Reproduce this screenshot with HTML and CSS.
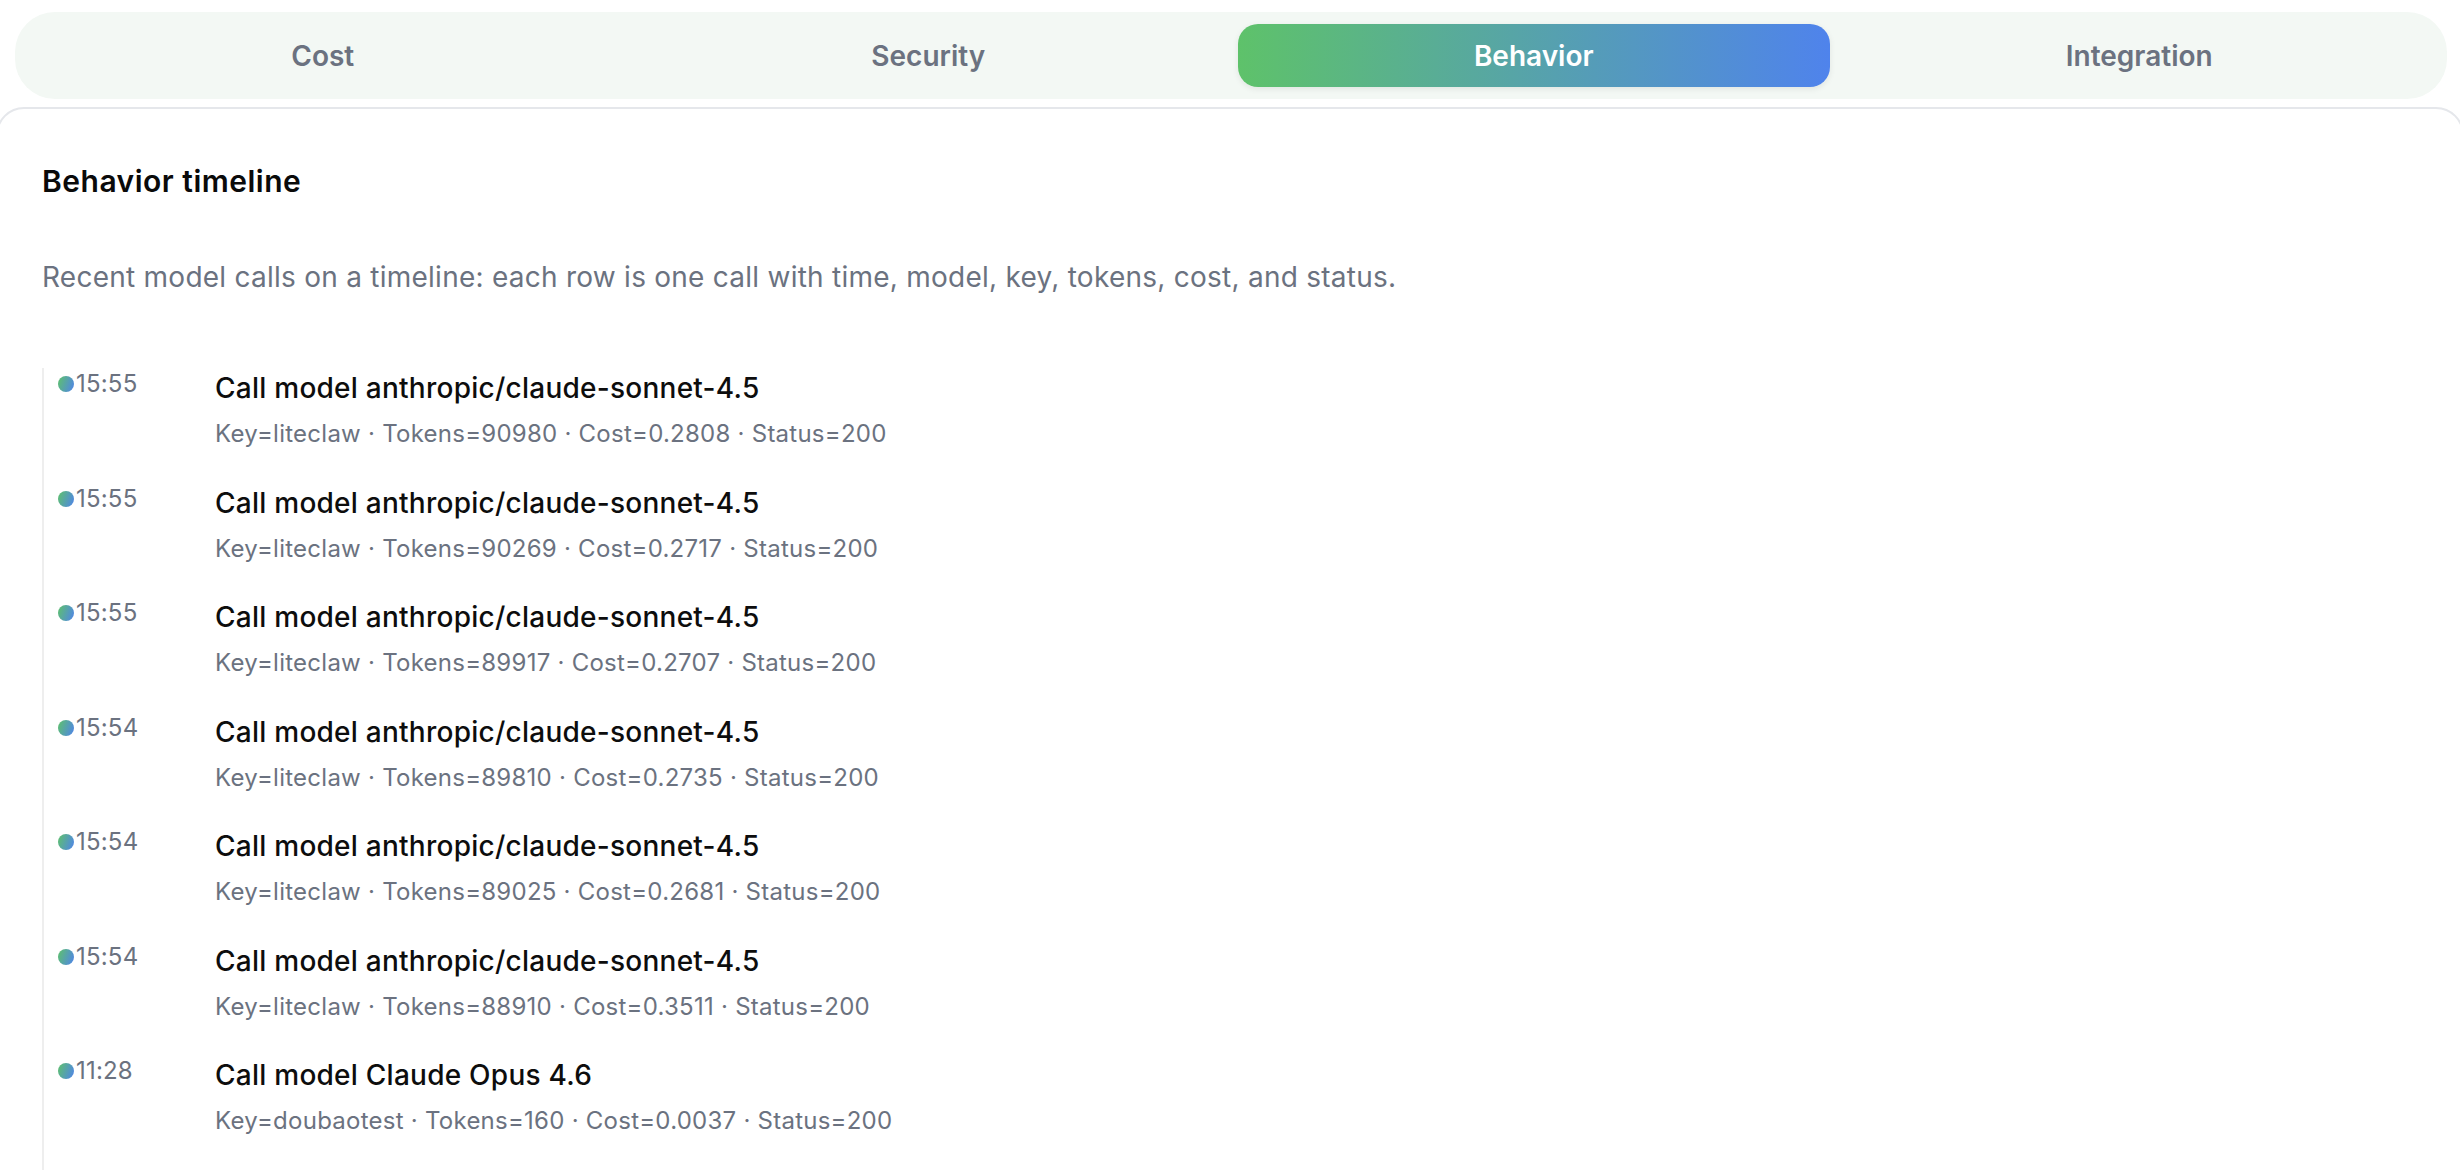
FILE: index.html
```html
<!DOCTYPE html>
<html lang="en">
<head>
<meta charset="utf-8">
<title>Behavior timeline</title>
<link rel="stylesheet" href="styles.css">
</head>
<body>
<div class="page">
  <nav class="tabs">
    <button class="tab">Cost</button>
    <button class="tab">Security</button>
    <button class="tab active">Behavior</button>
    <button class="tab">Integration</button>
  </nav>
  <section class="card">
    <h2 class="card-title">Behavior timeline</h2>
    <p class="card-desc">Recent model calls on a timeline: each row is one call with time, model, key, tokens, cost, and status.</p>
    <ul class="timeline">
      <li class="event">
        <div class="when"><span class="dot"></span><span class="time">15:55</span></div>
        <div class="what">
          <div class="event-title">Call model anthropic/claude-sonnet-4.5</div>
          <div class="event-meta">Key=liteclaw · Tokens=90980 · Cost=0.2808 · Status=200</div>
        </div>
      </li>
      <li class="event">
        <div class="when"><span class="dot"></span><span class="time">15:55</span></div>
        <div class="what">
          <div class="event-title">Call model anthropic/claude-sonnet-4.5</div>
          <div class="event-meta">Key=liteclaw · Tokens=90269 · Cost=0.2717 · Status=200</div>
        </div>
      </li>
      <li class="event">
        <div class="when"><span class="dot"></span><span class="time">15:55</span></div>
        <div class="what">
          <div class="event-title">Call model anthropic/claude-sonnet-4.5</div>
          <div class="event-meta">Key=liteclaw · Tokens=89917 · Cost=0.2707 · Status=200</div>
        </div>
      </li>
      <li class="event">
        <div class="when"><span class="dot"></span><span class="time">15:54</span></div>
        <div class="what">
          <div class="event-title">Call model anthropic/claude-sonnet-4.5</div>
          <div class="event-meta">Key=liteclaw · Tokens=89810 · Cost=0.2735 · Status=200</div>
        </div>
      </li>
      <li class="event">
        <div class="when"><span class="dot"></span><span class="time">15:54</span></div>
        <div class="what">
          <div class="event-title">Call model anthropic/claude-sonnet-4.5</div>
          <div class="event-meta">Key=liteclaw · Tokens=89025 · Cost=0.2681 · Status=200</div>
        </div>
      </li>
      <li class="event">
        <div class="when"><span class="dot"></span><span class="time">15:54</span></div>
        <div class="what">
          <div class="event-title">Call model anthropic/claude-sonnet-4.5</div>
          <div class="event-meta">Key=liteclaw · Tokens=88910 · Cost=0.3511 · Status=200</div>
        </div>
      </li>
      <li class="event">
        <div class="when"><span class="dot"></span><span class="time">11:28</span></div>
        <div class="what">
          <div class="event-title">Call model Claude Opus 4.6</div>
          <div class="event-meta">Key=doubaotest · Tokens=160 · Cost=0.0037 · Status=200</div>
        </div>
      </li>
    </ul>
  </section>
</div>
</body>
</html>
```
FILE: styles.css
```css
* { box-sizing: border-box; }

html, body {
  margin: 0;
  padding: 0;
  background: #ffffff;
  overflow: hidden;
}

body {
  font-family: Inter, "Noto Sans", "Liberation Sans", sans-serif;
  color: #111111;
}

.page {
  display: flex;
  flex-direction: column;
  gap: 8px;
  padding-top: 12px;
}

.tabs {
  display: grid;
  grid-template-columns: repeat(4, 1fr);
  gap: 14px;
  margin: 0 13px 0 15px;
  padding: 12px;
  background: #f3f8f4;
  border-radius: 40px;
}

.tab {
  height: 63px;
  border: 0;
  border-radius: 20px;
  background: transparent;
  font-family: inherit;
  font-size: 28px;
  font-weight: 600;
  color: #6b7280;
  cursor: pointer;
}

.tab.active {
  color: #ffffff;
  background: linear-gradient(90deg, #5ec26a 0%, #4f83ec 100%);
  box-shadow: 0 2px 6px rgba(0, 0, 0, 0.08);
}

.card {
  margin: 0 -4px;
  border: 2px solid #e5e7eb;
  border-radius: 28px;
  padding: 50px 44px 40px 44px;
  background: #ffffff;
  min-height: 1100px;
}

.card-title {
  margin: 0;
  font-size: 30px;
  line-height: 45px;
  font-weight: 600;
  color: #0a0a0a;
  letter-spacing: 0.5px;
}

.card-desc {
  margin: 53px 0 0 0;
  font-size: 28px;
  line-height: 40px;
  color: #6b7280;
  letter-spacing: 0.25px;
}

.timeline {
  list-style: none;
  margin: 71px 0 0 0;
  padding: 0;
  border-left: 2px solid #eeeeee;
}

.event {
  display: flex;
  align-items: flex-start;
  padding: 0 0 32.5px 14px;
}

.when {
  flex: 0 0 157px;
  display: flex;
  align-items: center;
  gap: 2px;
  height: 32px;
}

.dot {
  width: 16px;
  height: 16px;
  border-radius: 50%;
  background: linear-gradient(110deg, #5ec26a 0%, #4f83ec 100%);
  flex: none;
}

.time {
  font-size: 24px;
  line-height: 32px;
  color: #6b7280;
  letter-spacing: 0.2px;
}

.what {
  display: flex;
  flex-direction: column;
  gap: 10px;
}

.event-title {
  font-size: 28px;
  line-height: 40px;
  font-weight: 500;
  color: #0d0d0d;
  letter-spacing: 0.25px;
}

.event-meta {
  font-size: 24px;
  line-height: 32px;
  color: #6b7280;
  letter-spacing: 0.25px;
}
```
